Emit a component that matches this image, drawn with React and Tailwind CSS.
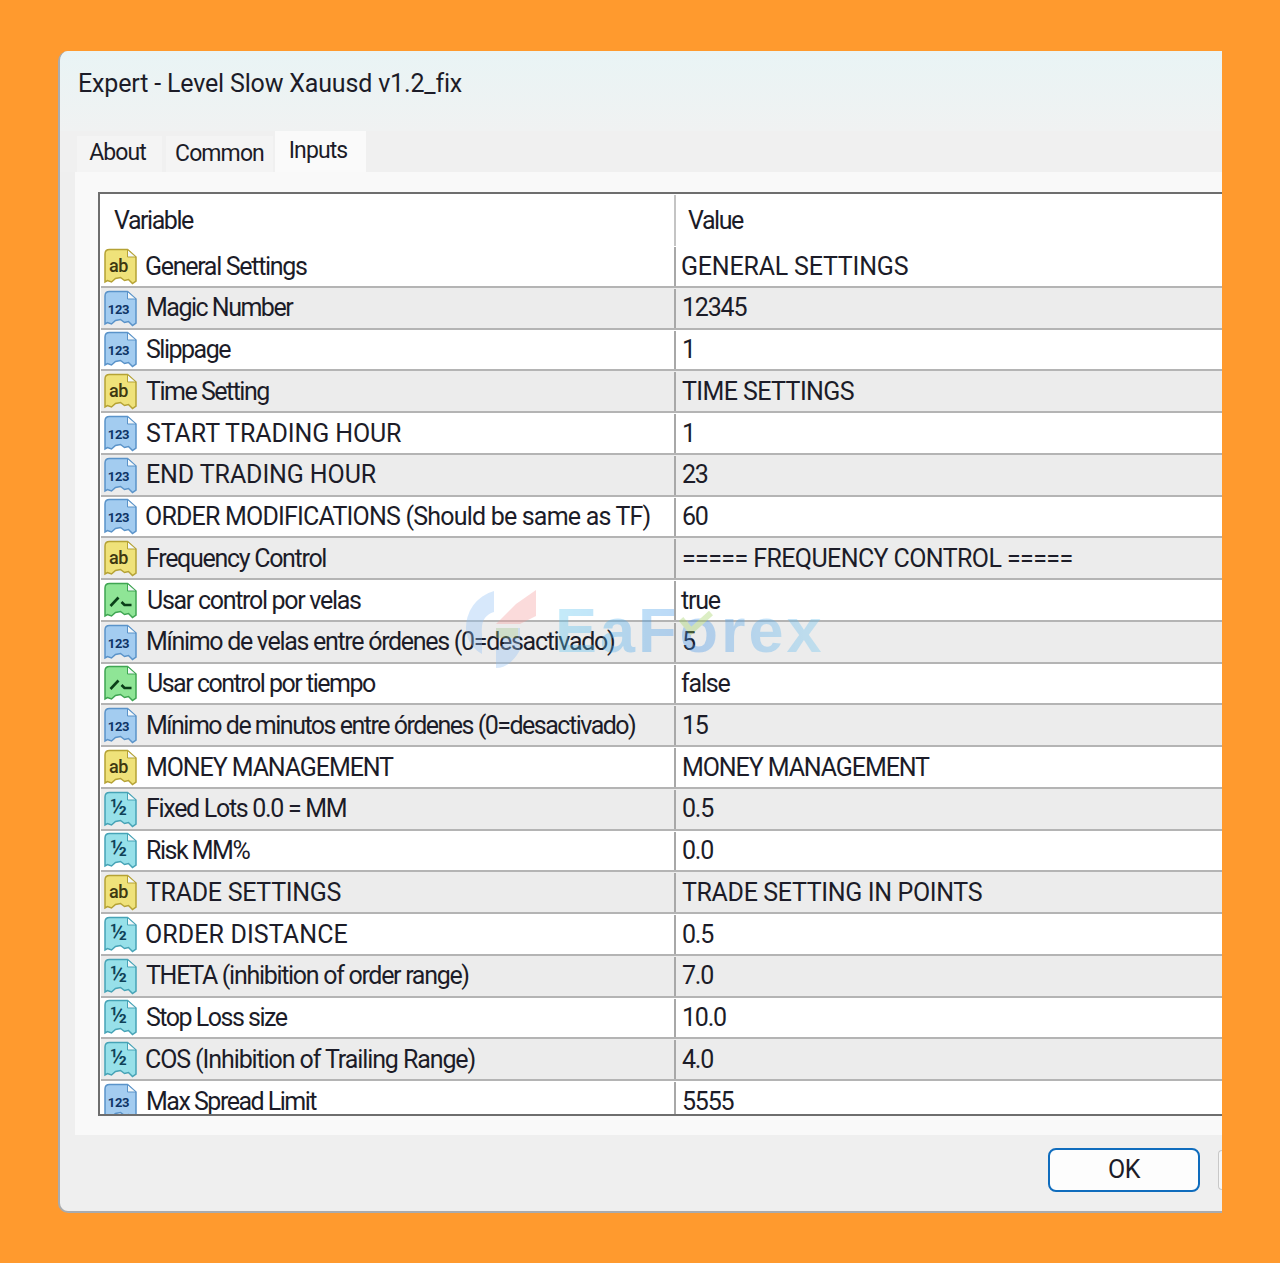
import React from "react";

const iconStyles = {
	ab: { fill: "#efe27a", edge: "#b5a235", ink: "#3d3810", label: "ab", size: 18 },
	num: { fill: "#a3ccf0", edge: "#5a93c9", ink: "#0f3466", label: "123", size: 13 },
	bool: { fill: "#8fe596", edge: "#3fa552", ink: "#0a3f18" },
	frac: { fill: "#97e0e9", edge: "#46a3b6", ink: "#0f4258", label: "½", size: 22 },
};

// tracking differs per row, the reference font is narrower on lower case than Roboto
const rows = [
	{ type: "ab", name: "General Settings", value: "GENERAL SETTINGS", nameClass: "ml-[8px] tracking-[-1.3px]", valueClass: "ml-[5px] tracking-[-0.2px]" },
	{ type: "num", name: "Magic Number", value: "12345", nameClass: "ml-[9px] tracking-[-1.5px]" },
	{ type: "num", name: "Slippage", value: "1", nameClass: "ml-[9px] tracking-[-1.5px]" },
	{ type: "ab", name: "Time Setting", value: "TIME SETTINGS", nameClass: "ml-[9px] tracking-[-1.5px]", valueClass: "ml-[6px] tracking-[-0.6px]" },
	{ type: "num", name: "START TRADING HOUR", value: "1", nameClass: "ml-[9px] tracking-[-0.1px]" },
	{ type: "num", name: "END TRADING HOUR", value: "23", nameClass: "ml-[9px] tracking-[-0.1px]" },
	{ type: "num", name: "ORDER MODIFICATIONS (Should be same as TF)", value: "60", nameClass: "ml-[8px] tracking-[-0.8px]" },
	{ type: "ab", name: "Frequency Control", value: "===== FREQUENCY CONTROL =====", nameClass: "ml-[9px] tracking-[-1.3px]", valueClass: "ml-[6px] tracking-[-0.6px]" },
	{ type: "bool", name: "Usar control por velas", value: "true", nameClass: "ml-[10px] tracking-[-1.3px]", valueClass: "ml-[5px] tracking-[-1.2px]" },
	{ type: "num", name: "Mínimo de velas entre órdenes (0=desactivado)", value: "5", nameClass: "ml-[9px] tracking-[-1.3px]" },
	{ type: "bool", name: "Usar control por tiempo", value: "false", nameClass: "ml-[10px] tracking-[-1.5px]", valueClass: "ml-[5px] tracking-[-1.2px]" },
	{ type: "num", name: "Mínimo de minutos entre órdenes (0=desactivado)", value: "15", nameClass: "ml-[9px] tracking-[-1.5px]" },
	{ type: "ab", name: "MONEY MANAGEMENT", value: "MONEY MANAGEMENT", nameClass: "ml-[9px] tracking-[-1.1px]", valueClass: "ml-[6px] tracking-[-1.1px]" },
	{ type: "frac", name: "Fixed Lots 0.0 = MM", value: "0.5", nameClass: "ml-[9px] tracking-[-1.3px]" },
	{ type: "frac", name: "Risk MM%", value: "0.0", nameClass: "ml-[9px] tracking-[-1.5px]" },
	{ type: "ab", name: "TRADE SETTINGS", value: "TRADE SETTING IN POINTS", nameClass: "ml-[9px] tracking-[-0.3px]", valueClass: "ml-[6px] tracking-[-0.35px]" },
	{ type: "frac", name: "ORDER DISTANCE", value: "0.5", nameClass: "ml-[8px] tracking-[0.1px]" },
	{ type: "frac", name: "THETA (inhibition of order range)", value: "7.0", nameClass: "ml-[9px] tracking-[-1.3px]" },
	{ type: "frac", name: "Stop Loss size", value: "10.0", nameClass: "ml-[9px] tracking-[-1.5px]" },
	{ type: "frac", name: "COS (Inhibition of Trailing Range)", value: "4.0", nameClass: "ml-[8px] tracking-[-1.1px]" },
	{ type: "num", name: "Max Spread Limit", value: "5555", nameClass: "ml-[9px] tracking-[-1.5px]" },
];

const TypeIcon = ({ type }) => {
	const s = iconStyles[type];
	return (
		<svg width="35" height="37" viewBox="0 0 34 37" className="shrink-0">
			<path
				d="M1.5 6 Q1.5 1.5 6 1.5 H24 L32.5 9 V33 L29 35.5 L25 31.5 L21 32.5 L17 29.5 L12 30.5 L8 34 L4 32.5 L1.5 34 Z"
				fill={s.fill}
				stroke={s.edge}
				strokeWidth="1.5"
			/>
			<path d="M24 1.5 V9 H32.5 Z" fill="#f4f8fa" stroke={s.edge} strokeWidth="1" />
			{type === "bool" ? (
				<>
					<path d="M7 24 L15 15.5" fill="none" stroke={s.ink} strokeWidth="2.6" />
					<path d="M18 20 L21 23 H28" fill="none" stroke={s.ink} strokeWidth="2.6" />
				</>
			) : (
				<text
					x="15"
					y="24"
					textAnchor="middle"
					fontFamily="Roboto, sans-serif"
					fontWeight={type === "num" ? 700 : 500}
					fontSize={s.size}
					fill={s.ink}
				>
					{s.label}
				</text>
			)}
		</svg>
	);
};

const Row = ({ row, index }) => (
	<div
		className={`flex h-[41.75px] shrink-0 border-b-2 border-[#b4b4b4] pt-px ${
			index % 2 === 1 ? "bg-[#ececec]" : "bg-white"
		}`}
	>
		<div className="flex w-[575px] shrink-0 items-center overflow-hidden border-r-2 border-[#a8a8a8] pl-[2px]">
			<TypeIcon type={row.type} />
			<span className={`-translate-x-px whitespace-nowrap ${row.nameClass}`}>{row.name}</span>
		</div>
		<div className="flex items-center">
			<span className={`whitespace-nowrap ${row.valueClass || "ml-[6px] tracking-[-1.2px]"}`}>{row.value}</span>
		</div>
	</div>
);

const Watermark = () => (
	<div className="pointer-events-none absolute left-[458px] top-[588px] flex items-center opacity-35">
		<svg width="84" height="84" viewBox="0 0 84 84">
			<path d="M36 3 A38 38 0 0 0 8 42 Q10 58 24 66 L24 46 Q22 28 36 24 Z" fill="#8fc0f5" />
			<path d="M38 36 L58 16 L78 2 L78 28 L62 36 Z" fill="#f59a9a" />
			<path d="M42 40 H62 V62 Q52 80 38 80 L38 62 L46 56 Z" fill="#8fc0f5" />
			<path d="M38 40 H60 V50 H38 Z" fill="#9cc48a" />
		</svg>
		<span className="ml-[13px] bg-linear-to-r from-[#5bc8f0] via-[#3f8fe8] to-[#6fc8f0] bg-clip-text font-['Liberation_Sans',sans-serif] text-[63px] leading-none font-bold tracking-[3px] text-transparent">
			EaForex
		</span>
		<svg width="34" height="24" viewBox="0 0 34 24" className="absolute top-[23px] left-[221px]">
			<path d="M2 8 L12 20 L32 2" fill="none" stroke="#9ccf5a" strokeWidth="6" />
		</svg>
	</div>
);

export default function App() {
	return (
		<div className="relative h-[1263px] w-[1280px] overflow-hidden bg-[#ff9a2e] pt-[51px] pl-[58px] font-['Roboto',sans-serif] text-[25px] tracking-[-0.35px] text-[#1c1c28]">
			<div className="flex h-[1162px] w-[1164px] flex-col overflow-hidden rounded-l-[10px] border-b-2 border-l-2 border-[#a9abae] bg-[#efefef]">
				<div className="h-[80px] shrink-0 bg-linear-to-b from-[#e9f4f5] to-[#f0f2f2] pt-[14px] pl-[18px] tracking-[-0.17px]">
					Expert - Level Slow Xauusd v1.2_fix
				</div>
				<div className="flex h-[41px] shrink-0 items-end bg-[#f0f0f0] pl-[17px] text-[23px] tracking-[-0.9px]">
					<div className="flex h-[36px] w-[85px] items-center justify-center bg-[#f4f4f4] pr-[4px] pb-px">About</div>
					<div className="ml-[4px] flex h-[36px] w-[107px] items-center justify-center bg-[#f4f4f4]">Common</div>
					<div className="ml-[2px] flex h-[41px] w-[91px] items-start justify-center bg-[#fafafa] pt-[3px] pr-[5px]">Inputs</div>
				</div>
				<div className="ml-[15px] h-[963px] shrink-0 bg-[#f9f9f9] pt-[20px] pl-[23px]">
					<div className="flex h-[924px] flex-col overflow-hidden border-t-2 border-b-2 border-l-2 border-[#6e6e6e] bg-white pl-px">
						<div className="flex h-[52px] shrink-0 pt-px tracking-[-1.45px]">
							<div className="flex w-[575px] shrink-0 items-center border-r-2 border-[#c4c4c4] pl-[13px]">Variable</div>
							<div className="flex items-center pl-[12px]">Value</div>
						</div>
						{rows.map((row, index) => (
							<Row key={row.name} row={row} index={index} />
						))}
					</div>
				</div>
				<div className="flex min-h-0 flex-1 items-start justify-end pt-[13px]">
					<button className="h-[44px] w-[152px] rounded-lg border-2 border-[#0f6cbd] bg-[#fdfdfd] text-[25px]">OK</button>
					<div className="mt-[2px] ml-[18px] h-[40px] w-[4px] rounded-l border-y border-l border-[#c8c8c8] bg-[#f6f6f6]" />
				</div>
			</div>
			<Watermark />
		</div>
	);
}
